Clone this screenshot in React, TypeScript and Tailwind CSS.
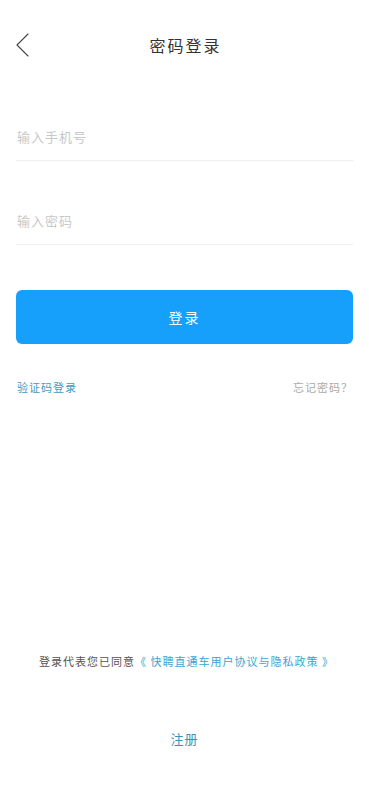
const cjk = "font-['Noto_Sans_CJK_SC',sans-serif]"

export default function App() {
  return (
    <div className={`w-[369px] h-[800px] bg-white flex flex-col ${cjk}`}>
      <div className="relative h-[90px] flex items-center justify-center">
        <div className="absolute left-[16px] top-[33px]">
          <svg viewBox="0 0 13 24" width="13" height="24" fill="none" stroke="#444" strokeWidth="1.1" strokeLinecap="round" strokeLinejoin="round">
            <polyline points="12,1 1,12 12,23" />
          </svg>
        </div>
        <div className="text-[16px] tracking-[2px] text-[#333] leading-none pl-[2px]">密码登录</div>
      </div>

      <div className="px-4 mt-[34px]">
        <div className="h-[37px] border-b border-[#eeeeee] text-[13px] text-[#c8c8c8] tracking-[1px] pl-[1px] leading-[26px]">输入手机号</div>
        <div className="h-[47px]" />
        <div className="h-[37px] border-b border-[#eeeeee] text-[13px] text-[#c8c8c8] tracking-[1px] pl-[1px] leading-[26px]">输入密码</div>

        <button className="mt-[45px] w-full h-[54px] rounded-[6px] bg-[#16a0fb] text-white text-[14px] tracking-[2px]">登录</button>

        <div className="mt-[38px] flex justify-between text-[11px] tracking-[1px] leading-none">
          <span className="text-[#3c9cc4] pl-[1px]">验证码登录</span>
          <span className="text-[#aaaaaa]">忘记密码？</span>
        </div>
      </div>

      <div className="flex-1" />

      <div className="text-center text-[11px] tracking-[1px] text-[#555] leading-none pl-[4px]">
        登录代表您已同意<span className="text-[#3aa6cf]">《 快聘直通车用户协议与隐私政策 》</span>
      </div>

      <div className="mt-[65px] mb-[55px] text-center text-[13px] tracking-[1px] text-[#3c8fb5] leading-none">注册</div>
    </div>
  )
}
